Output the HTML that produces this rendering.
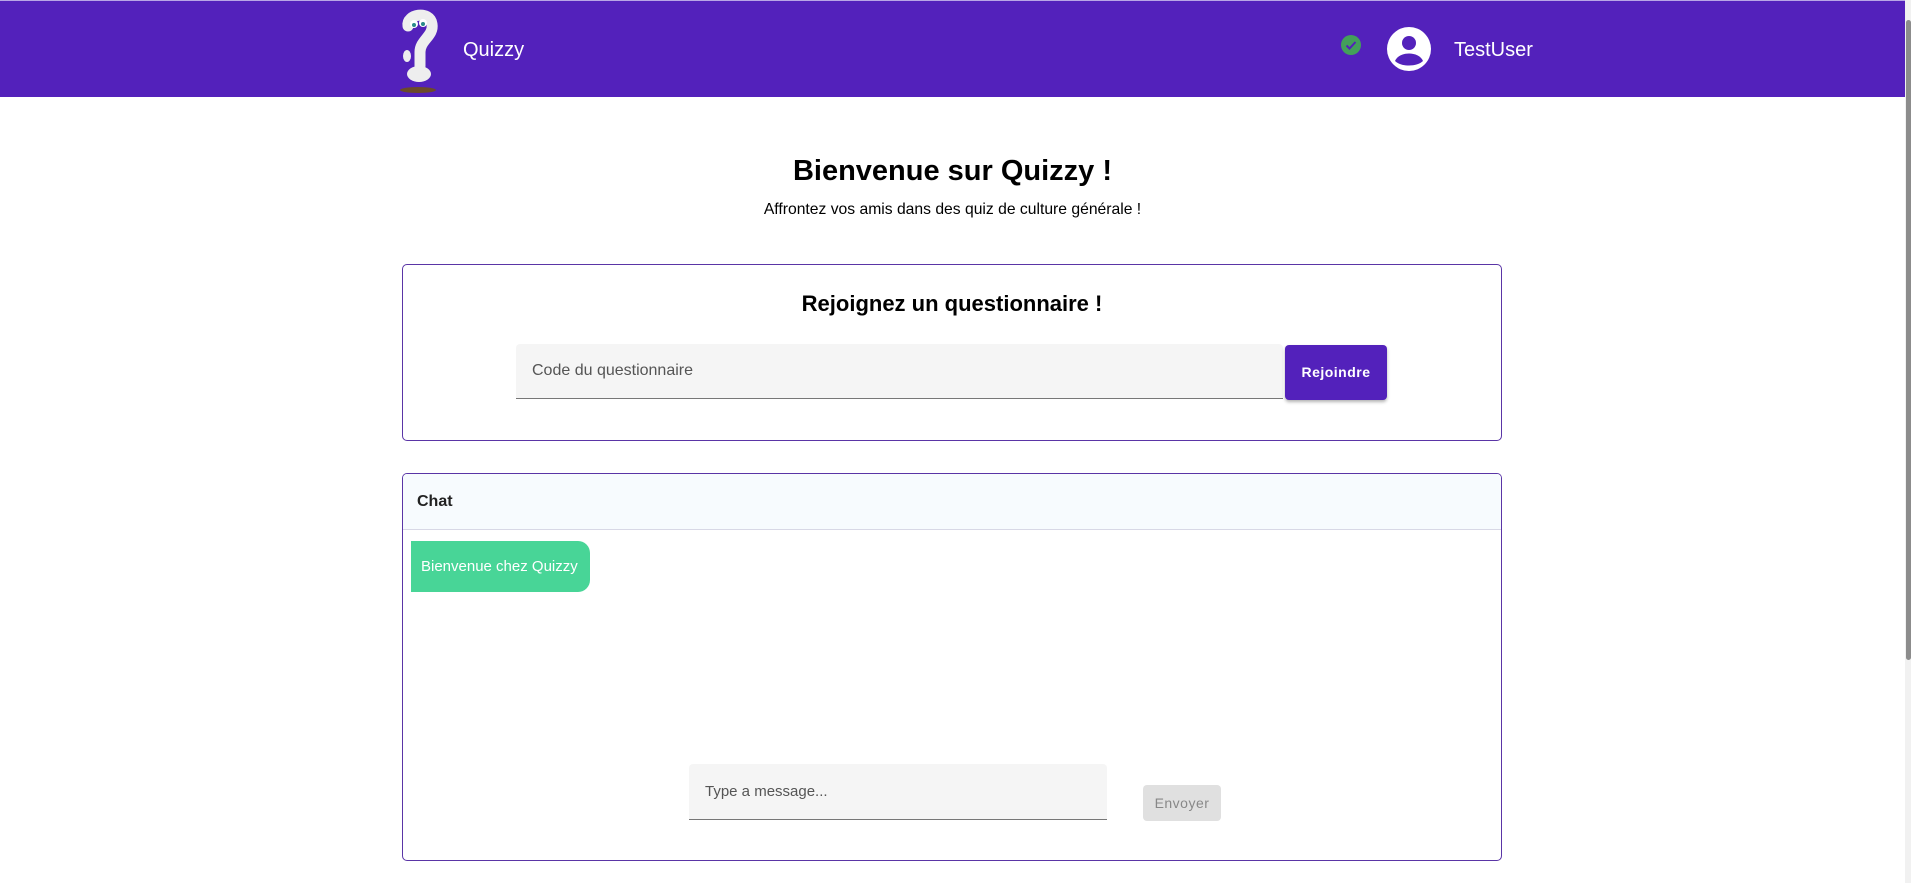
<!DOCTYPE html>
<html><head><meta charset="utf-8"><style>
*{box-sizing:border-box;margin:0;padding:0}
body{width:1911px;height:883px;overflow:hidden;background:#fff;font-family:"Liberation Sans",sans-serif;position:relative}
.abs{position:absolute}
.hdr{left:0;top:0;width:1905px;height:97px;background:#5321bb;border-top:1px solid #b9a6e6}
.sb{left:1905px;top:0;width:6px;height:883px;background:#f1f1f1}
.sb div{position:absolute;left:1px;top:20px;width:5px;height:640px;background:#8c8c8c;border-radius:3px}
.card{border:1px solid #5a35a6;border-radius:5px}
</style></head><body>
<div class="abs hdr"></div>
<div class="abs sb"><div></div></div>
<svg class="abs" style="left:394px;top:8px" width="48" height="86" viewBox="0 0 48 86">
<path d="M14 18 C12 6 36 2 38 16 C40 28 26 32 26 44 L26 58" stroke="#eee" stroke-width="11" fill="none" stroke-linecap="round"/>
<ellipse cx="25" cy="66" rx="12" ry="8" fill="#eee"/>
<circle cx="20" cy="16" r="4" fill="#fff"/><circle cx="29" cy="15" r="4" fill="#fff"/>
<circle cx="20" cy="17" r="2" fill="#2a8a8a"/><circle cx="29" cy="16" r="2" fill="#2a8a8a"/>
<ellipse cx="13" cy="48" rx="4" ry="6" fill="#eee"/>
<ellipse cx="24" cy="82" rx="18" ry="3" fill="#6b4a2a"/>
</svg>
<div class="abs" style="left:463px;top:39px;color:#fff;font-size:20px">Quizzy</div>
<svg class="abs" style="left:1341px;top:35px" width="20" height="20" viewBox="0 0 20 20"><circle cx="10" cy="10" r="10" fill="#43a05a"/><path d="M5.5 10.5l3 3 6-6.5" stroke="#5321bb" stroke-width="2" fill="none"/></svg>
<svg class="abs" style="left:1387px;top:27px" width="44" height="44" viewBox="0 0 44 44"><circle cx="22" cy="22" r="22" fill="#fff"/><circle cx="22" cy="16" r="7" fill="#5321bb"/><path d="M8 34 C12 24 32 24 36 34 C30 40 14 40 8 34Z" fill="#5321bb"/></svg>
<div class="abs" style="left:1454px;top:39px;color:#fff;font-size:20px">TestUser</div>
<div class="abs" style="left:0;width:1905px;top:155px;text-align:center;font-size:29px;font-weight:bold">Bienvenue sur Quizzy !</div>
<div class="abs" style="left:0;width:1905px;top:201px;text-align:center;font-size:15.7px">Affrontez vos amis dans des quiz de culture générale !</div>
<div class="abs card" style="left:402px;top:264px;width:1100px;height:177px"></div>
<div class="abs" style="left:402px;width:1100px;top:291px;text-align:center;font-size:22px;font-weight:bold">Rejoignez un questionnaire !</div>
<div class="abs" style="left:516px;top:344px;width:767px;height:55px;background:#f5f5f5;border-bottom:1px solid #777;border-radius:4px 4px 0 0;padding:18px 16px;font-size:16px;color:#555">Code du questionnaire</div>
<div class="abs" style="left:1285px;top:345px;width:102px;height:55px;background:#5321bb;border-radius:4px;color:#fff;font-size:14px;font-weight:bold;letter-spacing:.5px;text-align:center;line-height:55px;box-shadow:0 2px 3px rgba(0,0,0,.3)">Rejoindre</div>
<div class="abs card" style="left:402px;top:473px;width:1100px;height:388px;overflow:hidden">
<div style="height:56px;background:#f7fbfe;border-bottom:1px solid #d8d8e6;padding:19px 14px;font-size:16px;font-weight:bold;color:#222">Chat</div>
</div>
<div class="abs" style="left:411px;top:541px;width:179px;height:51px;background:#48d597;border-radius:0 12px 12px 0;color:#fff;font-size:15px;line-height:51px;padding-left:10px">Bienvenue chez Quizzy</div>
<div class="abs" style="left:689px;top:764px;width:418px;height:56px;background:#f5f5f5;border-bottom:1px solid #777;border-radius:4px 4px 0 0;padding:19px 16px;font-size:15px;color:#555">Type a message...</div>
<div class="abs" style="left:1143px;top:785px;width:78px;height:36px;background:#e0e0e0;border-radius:4px;color:#888;font-size:14px;letter-spacing:.5px;text-align:center;line-height:36px">Envoyer</div>
</body></html>
